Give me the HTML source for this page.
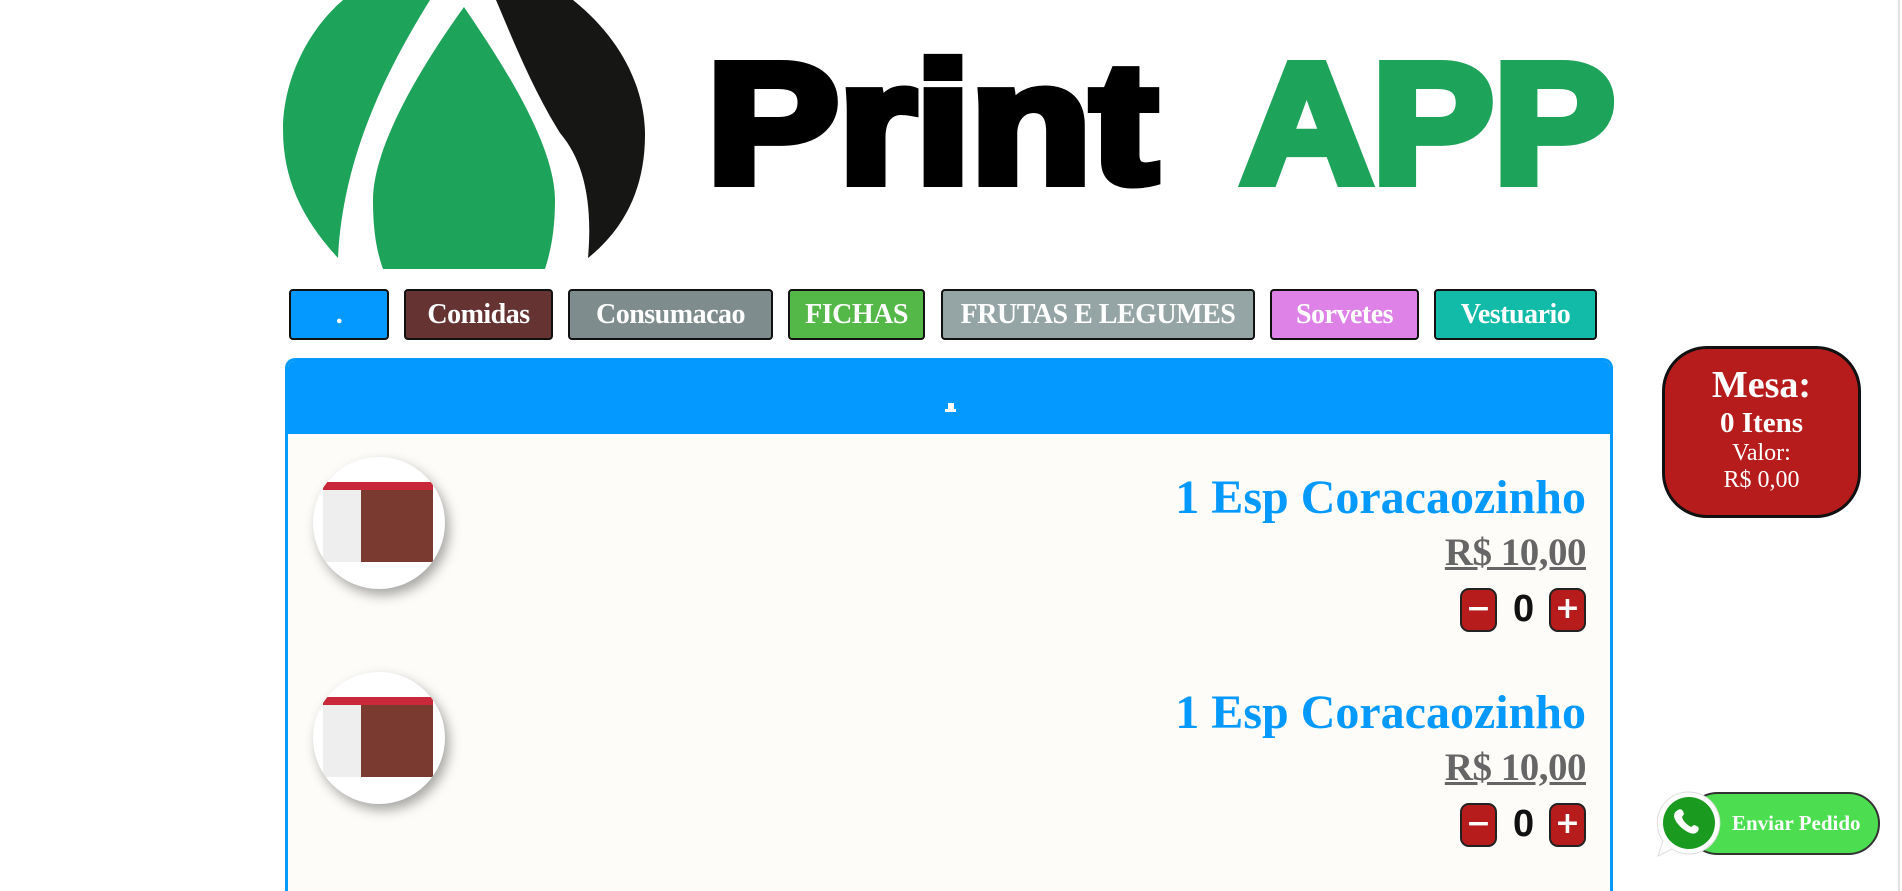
<!DOCTYPE html>
<html style="width:1902px;height:891px;overflow:hidden"><head><meta charset="utf-8"><style>
*{box-sizing:border-box;margin:0;padding:0}
body{width:1902px;height:891px;overflow:hidden;background:#fff;font-family:"Liberation Serif",serif;font-weight:bold;position:relative}
.abs{position:absolute}
.nav{position:absolute;top:289px;height:51px;border:2px solid #111;border-radius:4px;color:#fff;font-size:28px;text-align:center;line-height:47px;white-space:nowrap;letter-spacing:-0.5px}
.panel{position:absolute;left:285px;top:358px;width:1328px;height:533px;border:3px solid #0399fe;border-bottom:none;border-radius:10px 10px 0 0;background:#fdfcf8;overflow:hidden}
.phead{height:73px;background:#0399fe;position:relative}
.img{position:absolute;width:132px;height:132px;border-radius:50%;background:#fff;box-shadow:4px 6px 12px rgba(0,0,0,.35);overflow:hidden}
.title{position:absolute;color:#0399fe;font-size:48px;white-space:nowrap}
.price{position:absolute;color:#666;font-size:39px;text-decoration:underline;letter-spacing:-0.5px}
.btn{position:absolute;width:37px;height:44px;background:#b71c1c;border:2px solid #222;border-radius:9px;color:#fff;font-family:"DejaVu Sans",sans-serif;font-size:30px;text-align:center;line-height:38px}
.zero{position:absolute;font-size:38px;color:#111;font-family:"Liberation Sans",sans-serif}
</style></head><body>
<svg class="abs" style="left:283px;top:0" width="1340" height="270" viewBox="0 0 1340 270">
<path d="M60 0 L147 0 C110 60 60 150 55 258 C20 220 0 180 0 130 C0 80 25 30 60 0Z" fill="#1da35a"/>
<path d="M181 7 C150 50 90 140 90 200 C90 235 95 255 100 269 L262 269 C268 250 272 230 272 200 C272 140 210 50 181 7Z" fill="#1da35a"/>
<path d="M213 0 L290 0 C340 40 362 90 362 135 C362 190 340 230 305 258 C310 200 300 160 277 133 C250 90 230 40 213 0Z" fill="#161614"/>
<text x="424" y="182" font-family="Liberation Sans,sans-serif" font-weight="bold" font-size="170" fill="#000" stroke="#000" stroke-width="10" textLength="450" lengthAdjust="spacingAndGlyphs">Print</text>
<text x="958" y="182" font-family="Liberation Sans,sans-serif" font-weight="bold" font-size="170" fill="#1da35a" stroke="#1da35a" stroke-width="10" textLength="374" lengthAdjust="spacingAndGlyphs">APP</text>
</svg>
<div class="nav" style="left:289px;width:100px;background:#0399fe">.</div>
<div class="nav" style="left:404px;width:149px;background:#663333">Comidas</div>
<div class="nav" style="left:568px;width:205px;background:#7f8c8d">Consumacao</div>
<div class="nav" style="left:788px;width:137px;background:#54b848">FICHAS</div>
<div class="nav" style="left:941px;width:314px;background:#95a5a6">FRUTAS E LEGUMES</div>
<div class="nav" style="left:1270px;width:149px;background:#de82e8">Sorvetes</div>
<div class="nav" style="left:1434px;width:163px;background:#11bba8">Vestuario</div>
<div class="panel"><div class="phead"><div class="abs" style="left:660px;top:42px;width:6px;height:6px;background:#fff"></div><div class="abs" style="left:657px;top:48px;width:11px;height:3px;background:#fff"></div></div></div>
<div class="img" style="left:313px;top:457px"><div class="abs" style="left:10px;top:25px;width:110px;height:80px;background:#eee;border-top:8px solid #c8283a"></div><div class="abs" style="left:48px;top:33px;width:72px;height:72px;background:#7a3a30"></div></div>
<div class="img" style="left:313px;top:672px"><div class="abs" style="left:10px;top:25px;width:110px;height:80px;background:#eee;border-top:8px solid #c8283a"></div><div class="abs" style="left:48px;top:33px;width:72px;height:72px;background:#7a3a30"></div></div>
<div class="title" style="right:316px;top:470px">1 Esp Coracaozinho</div>
<div class="price" style="right:316px;top:530px">R$ 10,00</div>
<div class="btn" style="left:1460px;top:588px">−</div><div class="zero" style="left:1513px;top:588px">0</div><div class="btn" style="left:1549px;top:588px">+</div>
<div class="title" style="right:316px;top:685px">1 Esp Coracaozinho</div>
<div class="price" style="right:316px;top:745px">R$ 10,00</div>
<div class="btn" style="left:1460px;top:803px">−</div><div class="zero" style="left:1513px;top:803px">0</div><div class="btn" style="left:1549px;top:803px">+</div>
<div class="abs" style="left:1662px;top:346px;width:199px;height:172px;background:#b71c1c;border:3px solid #111;border-radius:45px;color:#fff;text-align:center">
<div style="font-size:38px;margin-top:14px">Mesa:</div><div style="font-size:29px">0 Itens</div><div style="font-size:24px;font-weight:normal">Valor:</div><div style="font-size:24px;font-weight:normal">R$ 0,00</div></div>
<div class="abs" style="left:1686px;top:792px;width:194px;height:63px;background:#4cde50;border:2px solid #333;border-radius:32px;color:#fff;font-size:21px;line-height:59px;padding-left:44px">Enviar Pedido</div>
<svg class="abs" style="left:1654px;top:788px" width="70" height="72" viewBox="0 0 70 72"><path d="M35 4a31 31 0 1 1-17 57L4 68 9 53A31 31 0 0 1 35 4z" fill="#fff" stroke="#ddd"/><circle cx="35" cy="35" r="26" fill="#1a9a1f"/><path d="M24 22c3-2 5 0 6 4l-2 3c1 4 5 8 9 10l3-2c4 1 6 3 4 6-3 4-7 3-12 0-6-4-11-9-12-15 0-3 2-5 4-6z" fill="#fff"/></svg>
<div class="abs" style="left:1898px;top:0;width:2px;height:891px;background:#e0e0e0"></div>
</body></html>
